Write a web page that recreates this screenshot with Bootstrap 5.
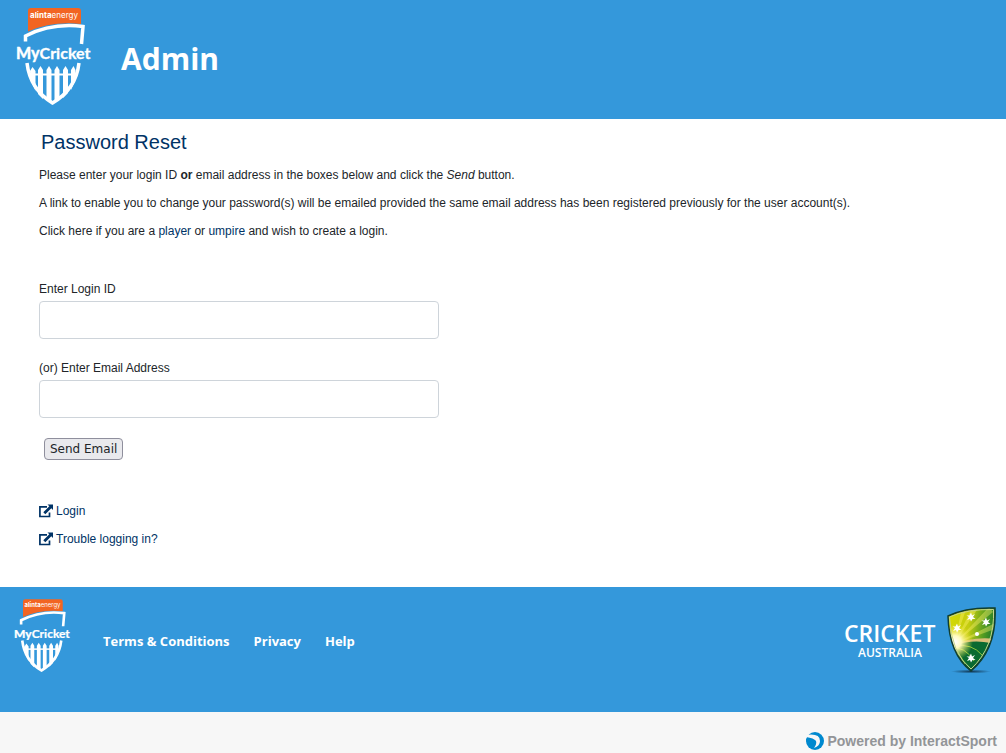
<!DOCTYPE html>
<html lang="en">
<head>
<meta charset="utf-8">
<meta name="viewport" content="width=device-width, initial-scale=1">
<title>MyCricket Admin - Password Reset</title>
<link href="https://cdn.jsdelivr.net/npm/bootstrap@5.3.0/dist/css/bootstrap.min.css" rel="stylesheet">
<style>
  body { font: 12px/18px "Liberation Sans", Arial, sans-serif; color: #212529; background: #f7f7f7; }
  a { color: #003366; text-decoration: none; }
  .brand-bar { background: #3498db; color: #fff; }
  .site-head { padding: 8px 16px 13px; gap: 29px; }
  .site-head h1 { font: 700 30px/36px "Open Sans", sans-serif; padding-top: 3px; }
  .logo-lg { width: 76px; height: 98px; }
  .logo-sm { width: 57px; height: 74px; }
  .content { padding: 11px 39px 39px; }
  .content h2 { font-size: 20px; line-height: 24px; color: #003366; margin: 0 2px 12px; }
  .content p { margin-bottom: 10px; }
  .reset-form { max-width: 400px; padding-top: 30px; }
  .reset-form label { display: block; margin-bottom: 3px; }
  .reset-form .form-control { height: 38px; border-color: #ced4da; border-radius: 4px; margin-bottom: 20px; }
  .send { font: 12px/15px "DejaVu Sans", sans-serif; color: #212529; background: #e9e9ed; border: 1px solid #8f8f9d; border-radius: 4px; padding: 3px 5px 2px; margin-left: 5px; height: 22px; }
  .links { padding-top: 42px; }
  .links a { gap: 3px; }
  .links svg { width: 14px; height: 14px; }
  .site-foot { padding: 12px 9px 38px 14px; min-height: 125px; }
  .site-foot nav { font: 700 13px/18px "Open Sans", sans-serif; gap: 24px; margin: 9px 0 0 32px; }
  .site-foot nav a { color: #fff; }
  .powered { font: 700 14px/18px "Liberation Sans", Arial, sans-serif; color: #939598; padding: 20px 9px 3px; gap: 3px; }
  .wordmark { font: 700 16px Lato, sans-serif; }
  .sponsor { font: 8px Inter, sans-serif; }
  .ca-name { font: 600 23px "Open Sans", sans-serif; }
  .ca-land { font: 600 12px "Open Sans", sans-serif; }
</style>
</head>
<body>
<header class="brand-bar site-head d-flex align-items-center">
  <svg class="logo-lg flex-shrink-0" viewBox="0 0 76 98" overflow="visible" role="img" aria-label="MyCricket">
    <path fill="#f26522" d="M12 23V3q0-3 3-3h47q3 0 3 3v13Q36 13 12 23.500z"/>
    <text class="sponsor" x="14" y="10" fill="#fff"><tspan font-weight="700">alinta</tspan>energy</text>
    <path fill="none" stroke="#fff" stroke-width="3.500" d="M9.500 33.500V28Q36 14.500 67 18.500L65.500 36"/>
    <text class="wordmark" x="0" y="51" fill="#fff" stroke="#fff" stroke-width=".3"><tspan font-weight="900">My</tspan>Cricket</text>
    <path fill="none" stroke="#fff" stroke-width="3.500" d="M11 55Q14 81 36.500 95Q60 81 63 55"/>
    <path fill="#fff" d="M14 63l2.500-4 3 4v20l-4-9zM22 62l2.500-4 2.500 4v29l-5-5zM30.500 62l2.500-4 2.500 4v33l-5-4zM38.500 62l2.500-4 2.500 4v29l-5 4zM47 62l2.500-4 2.500 4v23l-5 5zM55 62l2.500-4 2 4-1 12-3.500 8z"/>
    <path stroke="#fff" stroke-width="2" d="M16 66.500h42"/>
  </svg>
  <h1 class="m-0">Admin</h1>
</header>

<main class="content bg-white">
  <h2 class="fw-normal">Password Reset</h2>
  <p>Please enter your login ID <b>or</b> email address in the boxes below and click the <i>Send</i> button.</p>
  <p>A link to enable you to change your password(s) will be emailed provided the same email address has been registered previously for the user account(s).</p>
  <p>Click here if you are a <a href="#">player</a> or <a href="#">umpire</a> and wish to create a login.</p>
  <form class="reset-form">
    <label for="login">Enter Login ID</label>
    <input class="form-control" type="text" id="login">
    <label for="email">(or) Enter Email Address</label>
    <input class="form-control" type="email" id="email">
    <button class="send d-block" type="submit">Send Email</button>
  </form>
  <div class="links">
    <p class="d-flex"><a href="#" class="d-flex align-items-center"><svg viewBox="0 0 14 14" aria-hidden="true"><path fill="none" stroke="#003366" stroke-width="1.700" d="M8 2.900H.9V12.500h9.600V8.500"/><path fill="#003366" d="M8.500.500H14V6l-1.700-1.700-6 6-2-2 6-6z"/></svg>Login</a></p>
    <p class="d-flex mb-0"><a href="#" class="d-flex align-items-center"><svg viewBox="0 0 14 14" aria-hidden="true"><path fill="none" stroke="#003366" stroke-width="1.700" d="M8 2.900H.9V12.500h9.600V8.500"/><path fill="#003366" d="M8.500.500H14V6l-1.700-1.700-6 6-2-2 6-6z"/></svg>Trouble logging in?</a></p>
  </div>
</main>

<footer>
  <div class="brand-bar site-foot d-flex align-items-start">
    <div class="d-flex align-items-center">
      <svg class="logo-sm flex-shrink-0" viewBox="0 0 76 98" overflow="visible" role="img" aria-label="MyCricket">
        <path fill="#f26522" d="M12 23V3q0-3 3-3h47q3 0 3 3v13Q36 13 12 23.500z"/>
        <text class="sponsor" x="14" y="10" fill="#fff"><tspan font-weight="700">alinta</tspan>energy</text>
        <path fill="none" stroke="#fff" stroke-width="3.500" d="M9.500 33.500V28Q36 14.500 67 18.500L65.500 36"/>
        <text class="wordmark" x="0" y="51" fill="#fff" stroke="#fff" stroke-width=".3"><tspan font-weight="900">My</tspan>Cricket</text>
        <path fill="none" stroke="#fff" stroke-width="3.500" d="M11 55Q14 81 36.500 95Q60 81 63 55"/>
        <path fill="#fff" d="M14 63l2.500-4 3 4v20l-4-9zM22 62l2.500-4 2.500 4v29l-5-5zM30.500 62l2.500-4 2.500 4v33l-5-4zM38.500 62l2.500-4 2.500 4v29l-5 4zM47 62l2.500-4 2.500 4v23l-5 5zM55 62l2.500-4 2 4-1 12-3.500 8z"/>
        <path stroke="#fff" stroke-width="2" d="M16 66.500h42"/>
      </svg>
      <nav class="d-flex" aria-label="Footer">
        <a href="#">Terms &amp; Conditions</a>
        <a href="#">Privacy</a>
        <a href="#">Help</a>
      </nav>
    </div>
    <svg class="ms-auto flex-shrink-0" width="153" height="75" viewBox="0 0 153 75" role="img" aria-label="Cricket Australia">
      <defs>
        <linearGradient id="field" x1="0" y1="0.300" x2="1" y2="0.500">
          <stop offset="0" stop-color="#d8dc00"/><stop offset=".45" stop-color="#c4cc10"/><stop offset=".75" stop-color="#4f9a22"/><stop offset="1" stop-color="#0b6a2f"/>
        </linearGradient>
        <radialGradient id="sun"><stop offset="0" stop-color="#fff"/><stop offset=".35" stop-color="#fffbc0"/><stop offset="1" stop-color="#f5e636" stop-opacity="0"/></radialGradient>
        <radialGradient id="shade"><stop offset="0" stop-color="#123a58"/><stop offset="1" stop-color="#123a58" stop-opacity="0"/></radialGradient>
        <clipPath id="crest"><path d="M104 17Q122 8 151 9Q153 50 127 72Q105 55 104 17z"/></clipPath>
        <path id="star" d="M0-4.500L1-1.500 4-3 2 0 4.500 2 1.500 2 0 4.500-1 2-4 3-2 0-4.500-1.500-1.500-1.500z"/>
      </defs>
      <g fill="#fff">
        <text class="ca-name" x="0" y="43">CRICKET</text>
        <text class="ca-land" x="14" y="58">AUSTRALIA</text>
      </g>
      <ellipse cx="127" cy="72.500" rx="20" ry="2" fill="url(#shade)"/>
      <g clip-path="url(#crest)">
        <path fill="url(#field)" d="M100 5h53v70h-53z"/>
        <path fill="#fff36b" opacity=".4" d="M110 45L119 5h5zM110 45L130 5h7zM110 45L145 8l4 5zM110 45L151 24v6zM110 45L100 18v-8z"/>
        <path fill="#0a6a31" d="M100 52Q125 36 153 42V75H100z"/>
        <path fill="#d9bd78" d="M108 46Q128 37 153 40l-6 4q-18-4-37 2z"/>
        <path fill="none" stroke="#8cc63f" stroke-width="1" d="M107 49q14-2 23 13M106 52q9 0 15 13M110 47q18-3 28 9"/>
        <circle cx="111" cy="43" r="18" fill="url(#sun)"/>
      </g>
      <path fill="none" stroke="#113e31" stroke-width="1.500" d="M104 17Q122 8 151 9Q153 50 127 72Q105 55 104 17z"/>
      <path fill="none" stroke="#c7d58b" stroke-width="1" d="M105.500 18Q123 10 149.500 10.500Q151 48 127 70Q107 54 105.500 18z"/>
      <g fill="#fff"><use href="#star" x="127" y="18"/><use href="#star" x="142" y="23"/><use href="#star" x="113" y="29"/><use href="#star" x="127" y="59"/><circle cx="133" cy="35" r="2"/></g>
    </svg>
  </div>
  <div class="powered d-flex justify-content-end align-items-center">
    <svg width="18" height="18" viewBox="0 0 18 18" aria-hidden="true"><circle cx="9" cy="9" r="9" fill="#0089cf"/><path fill="#f7f7f7" d="M0 3Q14 1 14 9Q14 14 8 16Q11 12 10 9Q8 6 0 5z"/><path fill="#f7f7f7" d="M0 2h3L0 6z"/><path fill="#0089cf" d="M0 7Q5 7 10 9Q8 13 2 13.500z"/></svg>
    <span>Powered by InteractSport</span>
  </div>
</footer>
<script src="https://cdn.jsdelivr.net/npm/bootstrap@5.3.0/dist/js/bootstrap.bundle.min.js"></script>
</body>
</html>
